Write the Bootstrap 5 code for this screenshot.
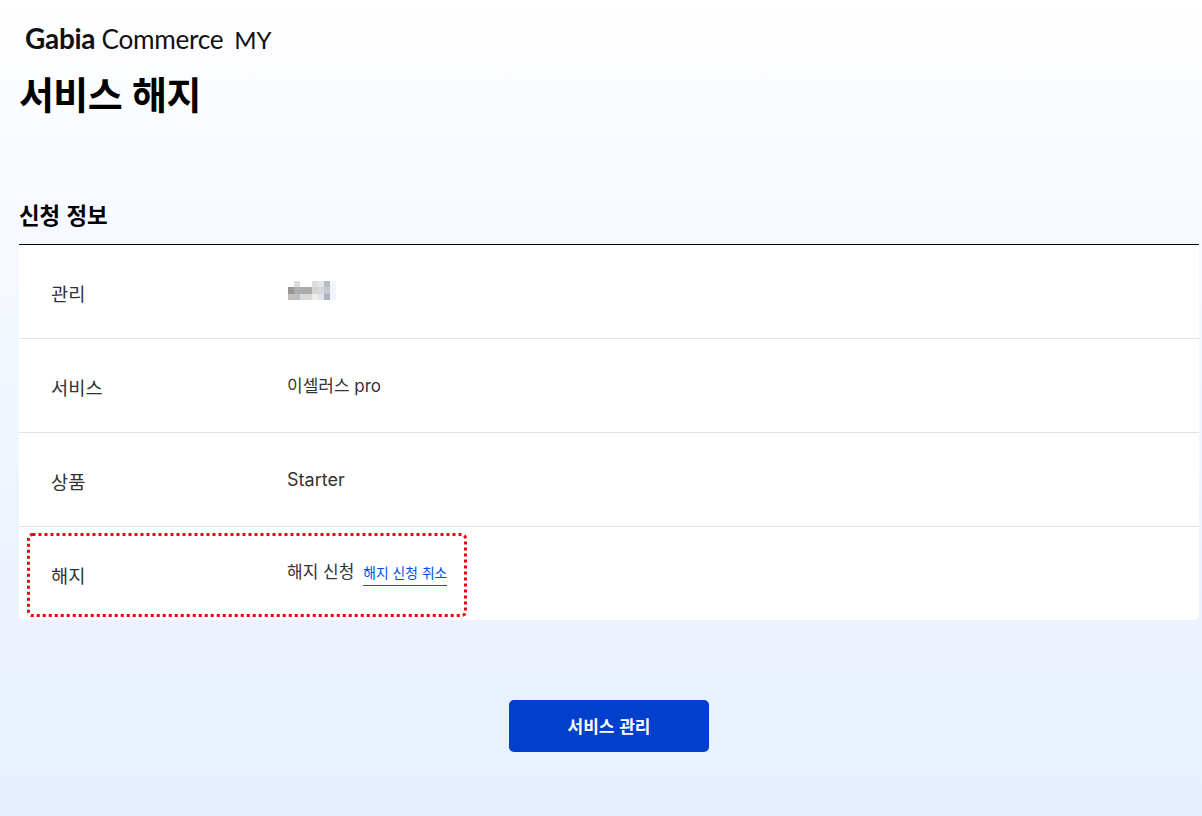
<!DOCTYPE html>
<html lang="ko">
<head>
<meta charset="utf-8">
<title>서비스 해지</title>
<link href="https://cdn.jsdelivr.net/npm/bootstrap@5.3.0/dist/css/bootstrap.min.css" rel="stylesheet">
<style>
html,body{height:100%}
body{margin:0;height:816px;overflow:hidden;background:linear-gradient(180deg,#ffffff 0%,#f6f9ff 27%,#e7effe 100%);font-family:Inter,"Noto Sans CJK KR",sans-serif;color:#222}
.page-wrap{padding:0 3px 0 19px}
.brand-line{height:75px;padding:18px 0 0 6px;font-family:Lato,"Noto Sans",sans-serif;font-size:26.2px;line-height:40px;color:#111;letter-spacing:-.3px}
.brand-line b{font-weight:700;font-size:28px}
.brand-my{margin-left:11px;font-size:24px;letter-spacing:0}
.page-title{font-family:"Noto Sans CJK KR",sans-serif;font-size:38px;font-weight:700;line-height:36px;margin:0;color:#000;letter-spacing:-.6px}
.sec-title{font-family:"Noto Sans CJK KR",sans-serif;font-size:22.4px;font-weight:700;line-height:30px;margin:88px 0 0;padding-bottom:15px;color:#000;border-bottom:1px solid #000;letter-spacing:0}
.info-panel{background:#fff;border-radius:0 0 6px 6px}
.info-line{height:94px;align-items:center;border-bottom:1px solid #e3e3e3;position:relative}
.info-line:last-child{border-bottom:0;height:93px}
.info-key{width:268px;padding-left:32px;font-size:18.7px;line-height:26px;padding-top:6px;color:#333}
.info-val{font-size:17px;line-height:24px;color:#333}
.info-line:last-child .info-val{margin-top:-2px}
.plan-name{font-size:18px}
.mosaic{display:block;margin:0 0 2px 1px}
.cancel-link{font-size:13.8px;line-height:20px;color:#0050e6;text-decoration:none;border-bottom:1px solid #0050e6;padding-bottom:2px;margin-left:9px;display:inline-block}
.mark-box{position:absolute;left:8px;top:6px;pointer-events:none}
.act-wrap{padding-top:80px}
.act-btn{width:200px;height:52px;background:#0040cc;border:0;border-radius:5px;color:#fff;font-family:"Noto Sans CJK KR",sans-serif;font-size:17px;font-weight:700}
.act-btn:hover{background:#0040cc;color:#fff}
</style>
</head>
<body>
<div class="page-wrap">
  <div class="brand-line"><b>Gabia</b> Commerce<span class="brand-my">MY</span></div>
  <h1 class="page-title">서비스 해지</h1>
  <h2 class="sec-title">신청 정보</h2>
  <div class="info-panel">
    <div class="d-flex info-line">
      <div class="info-key">관리</div>
      <div class="info-val">
        <svg class="mosaic" width="48" height="19" viewBox="0 0 48 19" aria-hidden="true">
          <rect x="6" y="0" width="6" height="6" fill="#dddddd"/>
          <rect x="24" y="0" width="6" height="6" fill="#e0dcd8"/>
          <rect x="30" y="0" width="6" height="6" fill="#e4e6e8"/>
          <rect x="36" y="0" width="6" height="6" fill="#b8bcc0"/>
          <rect x="42" y="0" width="6" height="6" fill="#f2f6fa"/>
          <rect x="0" y="6" width="6" height="7" fill="#9a9494"/>
          <rect x="6" y="6" width="12" height="7" fill="#a8adb0"/>
          <rect x="18" y="6" width="6" height="7" fill="#aaaaaa"/>
          <rect x="24" y="6" width="6" height="7" fill="#d8d4d0"/>
          <rect x="30" y="6" width="6" height="7" fill="#d0d8e0"/>
          <rect x="36" y="6" width="6" height="7" fill="#c8c8c8"/>
          <rect x="42" y="6" width="6" height="7" fill="#eef4fa"/>
          <rect x="0" y="13" width="6" height="6" fill="#c4bebc"/>
          <rect x="6" y="13" width="6" height="6" fill="#b8c0c4"/>
          <rect x="12" y="13" width="12" height="6" fill="#d8d8d8"/>
          <rect x="24" y="13" width="6" height="6" fill="#f0ebe6"/>
          <rect x="30" y="13" width="6" height="6" fill="#dce4ec"/>
          <rect x="36" y="13" width="6" height="6" fill="#aeb2b6"/>
          <rect x="42" y="13" width="6" height="6" fill="#f0f4f8"/>
        </svg>
      </div>
    </div>
    <div class="d-flex info-line">
      <div class="info-key">서비스</div>
      <div class="info-val">이셀러스 pro</div>
    </div>
    <div class="d-flex info-line">
      <div class="info-key">상품</div>
      <div class="info-val plan-name">Starter</div>
    </div>
    <div class="d-flex info-line">
      <div class="info-key">해지</div>
      <div class="info-val">해지 신청<a href="#" class="cancel-link">해지 신청 취소</a></div>
      <svg class="mark-box" width="440" height="84" viewBox="0 0 440 84" aria-hidden="true"><rect x="1.5" y="1.5" width="437" height="81" rx="4" fill="none" stroke="#ee0010" stroke-width="3" stroke-dasharray="3 3"/></svg>
    </div>
  </div>
  <div class="act-wrap d-flex justify-content-center">
    <button type="button" class="btn act-btn">서비스 관리</button>
  </div>
</div>
<script src="https://cdn.jsdelivr.net/npm/bootstrap@5.3.0/dist/js/bootstrap.bundle.min.js"></script>
</body>
</html>
